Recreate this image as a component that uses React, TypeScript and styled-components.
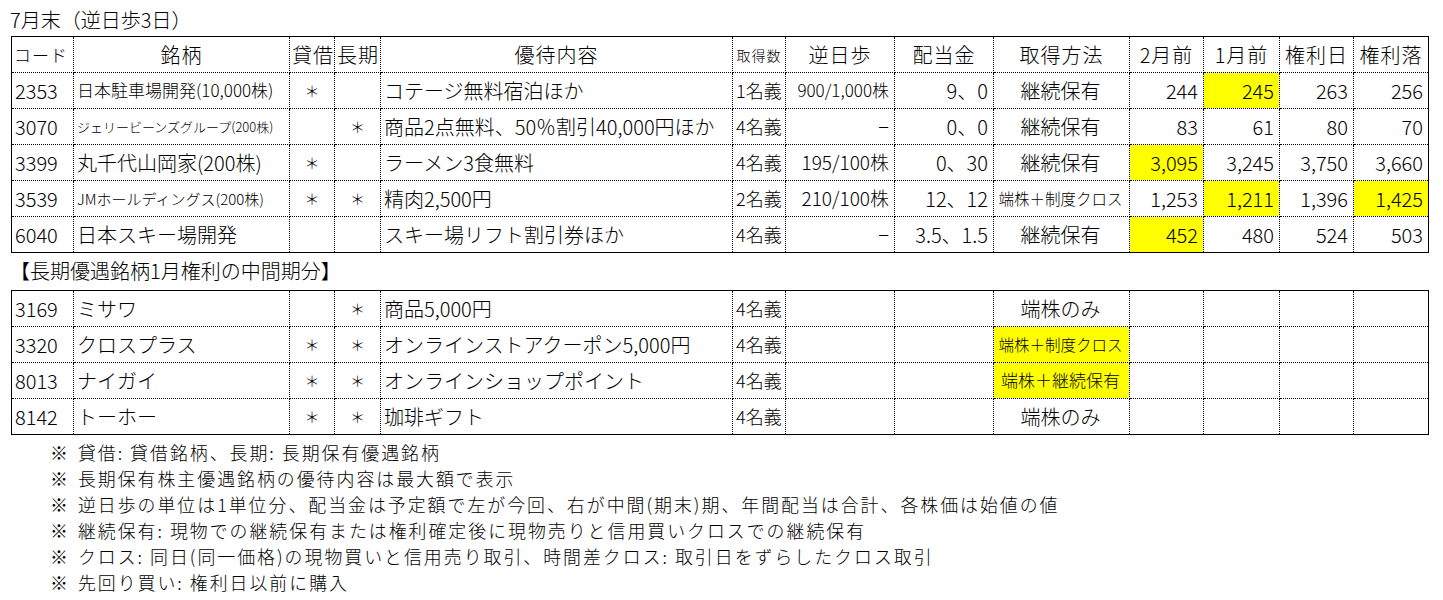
import * as React from "react";
import { FC } from "react";
import styled, { createGlobalStyle } from "styled-components";

const GlobalStyle = createGlobalStyle`
  html, body {
    margin: 0;
    padding: 0;
    background: #fff;
  }

  body {
    font-family: "Noto Sans CJK JP", "Noto Sans", sans-serif;
    font-weight: 300;
    color: #000;
  }
`;

const Page = styled.div`
  width: 1443px;
  padding-top: 6px;
`;

const Caption = styled.div`
  height: 30px;
  line-height: 28px;
  padding-left: 10px;
  font-size: 20px;
`;

const Section = styled.div`
  height: 37px;
  line-height: 36px;
  padding-left: 10px;
  font-size: 20px;
`;

const Sheet = styled.table`
  margin-left: 11px;
  width: 1417px;
  table-layout: fixed;
  border-collapse: collapse;
  border: 1px solid #000;
`;

const Row = styled.tr`
  height: 36px;
`;

type Align = "left" | "center" | "right";

const Cell = styled.td<{ $align?: Align; $size?: number; $hl?: boolean }>`
  border: 1px dotted #000;
  padding: 0 5px 0 3px;
  font-size: ${(p) => p.$size ?? 20}px;
  text-align: ${(p) => p.$align ?? "left"};
  background: ${(p) => (p.$hl ? "#ffff00" : "transparent")};
  white-space: nowrap;
  overflow: hidden;
  vertical-align: middle;
  line-height: 1.2;
`;

const HeadCell = styled.th<{ $align?: Align; $size?: number }>`
  border: 1px dotted #000;
  padding: 0 2px;
  font-weight: 300;
  font-size: ${(p) => p.$size ?? 20}px;
  text-align: ${(p) => p.$align ?? "center"};
  letter-spacing: 1px;
  white-space: nowrap;
  overflow: hidden;
  vertical-align: middle;
`;

const Star = styled(Cell)`
  font-size: 15px;
  text-align: center;
  padding: 0;
`;

const Notes = styled.ul`
  list-style: none;
  margin: 0;
  padding: 4px 0 0 50px;
`;

const Note = styled.li`
  font-size: 17.9px;
  letter-spacing: 2px;
  line-height: 26px;
  white-space: nowrap;
`;

const Mark = styled.span`
  margin-right: 8px;
`;

const widths = [62, 216, 45, 46, 352, 53, 109, 99, 136, 74, 76, 74, 75];

type Stock = {
  code: string;
  name: string;
  nameSize?: number;
  lend?: boolean;
  long?: boolean;
  benefit: string;
  accounts: string;
  fee?: string;
  feeSize?: number;
  dividend?: string;
  method: string;
  methodSize?: number;
  methodHl?: boolean;
  prices?: string[];
  hl?: number[];
};

const july: Stock[] = [
  {
    code: "2353",
    name: "日本駐車場開発(10,000株)",
    nameSize: 17,
    lend: true,
    benefit: "コテージ無料宿泊ほか",
    accounts: "1名義",
    fee: "900/1,000株",
    feeSize: 17,
    dividend: "9、0",
    method: "継続保有",
    prices: ["244", "245", "263", "256"],
    hl: [1],
  },
  {
    code: "3070",
    name: "ジェリービーンズグループ(200株)",
    nameSize: 13,
    long: true,
    benefit: "商品2点無料、50％割引40,000円ほか",
    accounts: "4名義",
    fee: "−",
    dividend: "0、0",
    method: "継続保有",
    prices: ["83", "61", "80", "70"],
  },
  {
    code: "3399",
    name: "丸千代山岡家(200株)",
    lend: true,
    benefit: "ラーメン3食無料",
    accounts: "4名義",
    fee: "195/100株",
    feeSize: 19,
    dividend: "0、30",
    method: "継続保有",
    prices: ["3,095", "3,245", "3,750", "3,660"],
    hl: [0],
  },
  {
    code: "3539",
    name: "JMホールディングス(200株)",
    nameSize: 15,
    lend: true,
    long: true,
    benefit: "精肉2,500円",
    accounts: "2名義",
    fee: "210/100株",
    feeSize: 19,
    dividend: "12、12",
    method: "端株＋制度クロス",
    methodSize: 15.5,
    prices: ["1,253", "1,211", "1,396", "1,425"],
    hl: [1, 3],
  },
  {
    code: "6040",
    name: "日本スキー場開発",
    benefit: "スキー場リフト割引券ほか",
    accounts: "4名義",
    fee: "−",
    dividend: "3.5、1.5",
    method: "継続保有",
    prices: ["452", "480", "524", "503"],
    hl: [0],
  },
];

const longTerm: Stock[] = [
  { code: "3169", name: "ミサワ", long: true, benefit: "商品5,000円", accounts: "4名義", method: "端株のみ" },
  {
    code: "3320",
    name: "クロスプラス",
    lend: true,
    long: true,
    benefit: "オンラインストアクーポン5,000円",
    accounts: "4名義",
    method: "端株＋制度クロス",
    methodSize: 15.5,
    methodHl: true,
  },
  {
    code: "8013",
    name: "ナイガイ",
    lend: true,
    long: true,
    benefit: "オンラインショップポイント",
    accounts: "4名義",
    method: "端株＋継続保有",
    methodSize: 17,
    methodHl: true,
  },
  { code: "8142", name: "トーホー", lend: true, long: true, benefit: "珈琲ギフト", accounts: "4名義", method: "端株のみ" },
];

const Cols: FC = () => (
  <colgroup>
    {widths.map((w, i) => (
      <col key={i} style={{ width: w }} />
    ))}
  </colgroup>
);

const StockRow: FC<{ s: Stock }> = ({ s }) => {
  const prices = s.prices ?? ["", "", "", ""];
  return (
    <Row>
      <Cell>{s.code}</Cell>
      <Cell $size={s.nameSize}>{s.name}</Cell>
      <Star>{s.lend ? "＊" : ""}</Star>
      <Star>{s.long ? "＊" : ""}</Star>
      <Cell>{s.benefit}</Cell>
      <Cell $size={18}>{s.accounts}</Cell>
      <Cell $align="right" $size={s.feeSize}>{s.fee ?? ""}</Cell>
      <Cell $align="right">{s.dividend ?? ""}</Cell>
      <Cell $align="center" $size={s.methodSize} $hl={s.methodHl}>
        {s.method}
      </Cell>
      {prices.map((p, i) => (
        <Cell key={i} $align="right" $hl={s.hl?.includes(i)}>
          {p}
        </Cell>
      ))}
    </Row>
  );
};

const notes = [
  "貸借: 貸借銘柄、長期: 長期保有優遇銘柄",
  "長期保有株主優遇銘柄の優待内容は最大額で表示",
  "逆日歩の単位は1単位分、配当金は予定額で左が今回、右が中間(期末)期、年間配当は合計、各株価は始値の値",
  "継続保有: 現物での継続保有または権利確定後に現物売りと信用買いクロスでの継続保有",
  "クロス: 同日(同一価格)の現物買いと信用売り取引、時間差クロス: 取引日をずらしたクロス取引",
  "先回り買い: 権利日以前に購入",
];

const App: FC = () => {
  return (
    <Page>
      <GlobalStyle />
      <Caption>7月末（逆日歩3日）</Caption>
      <Sheet>
        <Cols />
        <thead>
          <Row>
            <HeadCell $align="left" $size={17}>コード</HeadCell>
            <HeadCell>銘柄</HeadCell>
            <HeadCell>貸借</HeadCell>
            <HeadCell>長期</HeadCell>
            <HeadCell>優待内容</HeadCell>
            <HeadCell $size={14}>取得数</HeadCell>
            <HeadCell>逆日歩</HeadCell>
            <HeadCell>配当金</HeadCell>
            <HeadCell>取得方法</HeadCell>
            <HeadCell>2月前</HeadCell>
            <HeadCell>1月前</HeadCell>
            <HeadCell>権利日</HeadCell>
            <HeadCell>権利落</HeadCell>
          </Row>
        </thead>
        <tbody>
          {july.map((s) => (
            <StockRow key={s.code} s={s} />
          ))}
        </tbody>
      </Sheet>
      <Section>【長期優遇銘柄1月権利の中間期分】</Section>
      <Sheet>
        <Cols />
        <tbody>
          {longTerm.map((s) => (
            <StockRow key={s.code} s={s} />
          ))}
        </tbody>
      </Sheet>
      <Notes>
        {notes.map((n) => (
          <Note key={n}>
            <Mark>※</Mark>
            {n}
          </Note>
        ))}
      </Notes>
    </Page>
  );
};

export default App;
